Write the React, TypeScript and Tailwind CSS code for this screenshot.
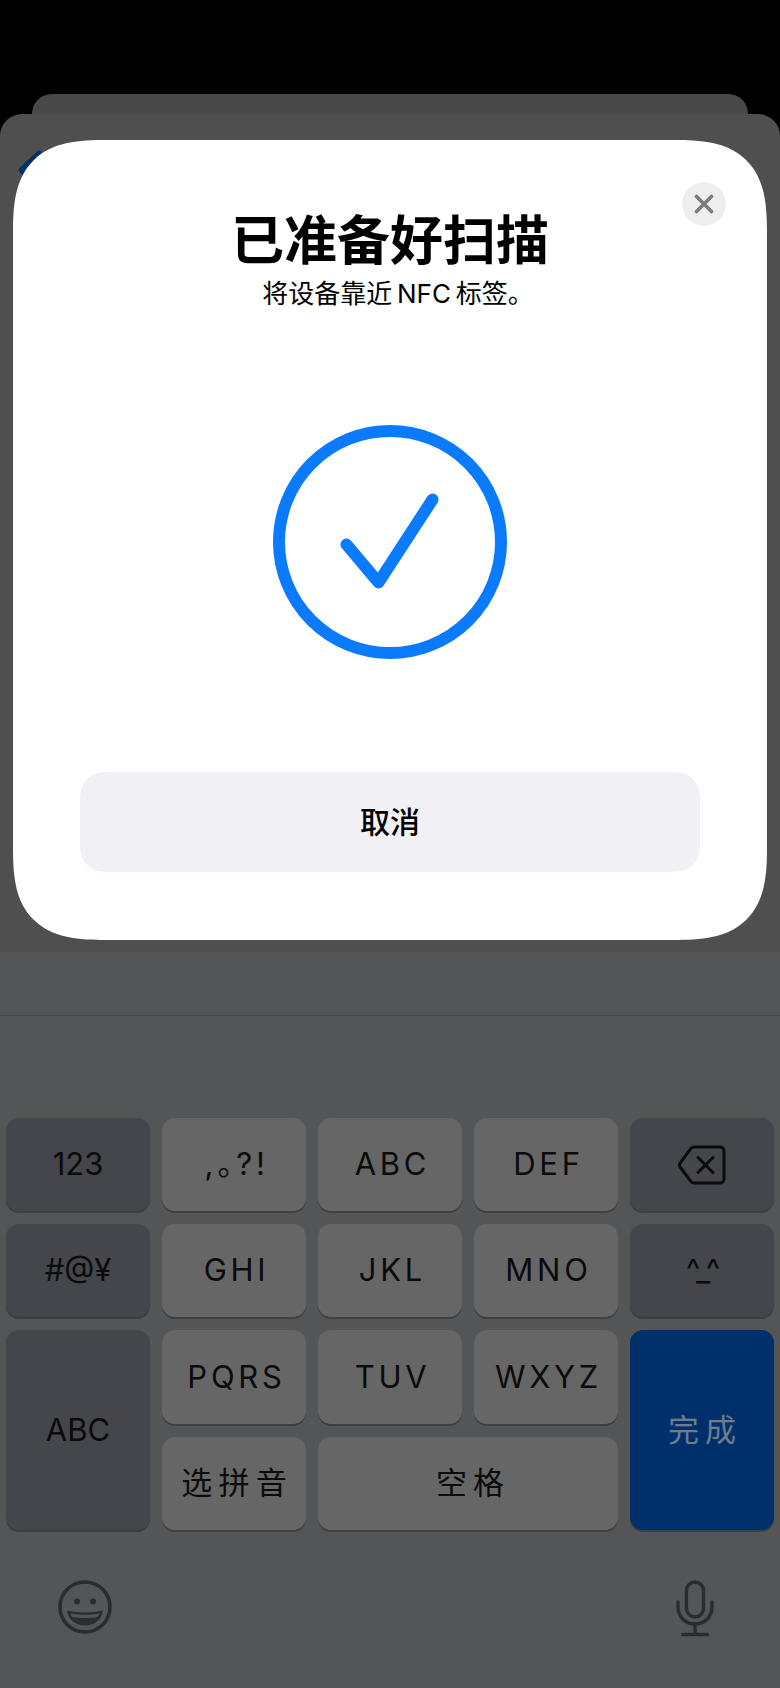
const cjk = "font-['Inter','Noto_Sans_CJK_SC',sans-serif]";

function Key({
  children,
  tone = "light",
  className = "",
}: {
  children: React.ReactNode;
  tone?: "light" | "dark" | "blue";
  className?: string;
}) {
  const tones = {
    light: "bg-[#666666] shadow-[0_2px_0_#3f4042]",
    dark: "bg-[#45464b] shadow-[0_2px_0_#3c3d41]",
    blue: "bg-[#00306b] shadow-[0_2px_0_#3f4042]",
  };
  return (
    <div className={`flex items-center justify-center rounded-[13px] text-[#0b0b0c] ${tones[tone]} ${className}`}>
      {children}
    </div>
  );
}

function Backspace() {
  return (
    <svg width="48" height="40" viewBox="0 0 48 40" fill="none" stroke="#0b0b0c" strokeWidth="3" strokeLinejoin="round" strokeLinecap="round">
      <path d="M16 2H42a4 4 0 0 1 4 4V34a4 4 0 0 1-4 4H16a4 4 0 0 1-3-1.400L2.500 22.500a4 4 0 0 1 0-5L13 3.400A4 4 0 0 1 16 2Z" />
      <path d="M20 12.500L35 27.500M35 12.500L20 27.500" />
    </svg>
  );
}

function Smiley() {
  return (
    <svg width="54" height="54" viewBox="0 0 54 54" fill="none">
      <circle cx="27" cy="27" r="25" stroke="#2b2c2e" strokeWidth="3.600" />
      <circle cx="19" cy="21.500" r="3" fill="#2b2c2e" />
      <circle cx="35" cy="21.500" r="3" fill="#2b2c2e" />
      <path d="M9 30.500C20 33 34 33 45 30.500C44 40 36 45.500 27 45.500C18 45.500 10 40 9 30.500Z" fill="#2b2c2e" />
      <path d="M12.500 33.500C21 35.300 33 35.300 41.500 33.500C41 35 40.500 36 39.500 37C32 38.300 22 38.300 14.500 37C13.500 36 13 35 12.500 33.500Z" fill="#535557" />
    </svg>
  );
}

function Mic() {
  return (
    <svg width="38" height="57" viewBox="0 0 38 57" fill="none" stroke="#2b2c2e" strokeWidth="3.400" strokeLinecap="round">
      <rect x="10.500" y="2" width="17" height="35" rx="8.500" />
      <path d="M2 22V27C2 37 9.500 44 19 44C28.500 44 36 37 36 27V22" />
      <path d="M19 44V54.500M6.500 54.500H31.500" />
    </svg>
  );
}

export default function App() {
  const letter = "text-[31px] tracking-[0.12em] indent-[0.16em]";
  const han = "text-[31px] tracking-[0.2em] indent-[0.2em]";
  const plain = "text-[31px]";
  return (
    <div className={`flex h-[1688px] w-[780px] flex-col overflow-hidden bg-black pt-[94px] ${cjk}`}>
      <div className="mx-[32px] h-[20px] shrink-0 rounded-t-[20px] bg-[#484848]" />

      <div className="relative h-[838px] shrink-0 rounded-t-[22px] bg-[#4f4f50]">
        <svg className="absolute left-[18px] top-[36px]" width="30" height="30" viewBox="0 0 30 30" fill="none" stroke="#00306b" strokeWidth="5" strokeLinecap="round" strokeLinejoin="round">
          <path d="M21 3L3 20L9 26" />
        </svg>

        <div className="absolute left-[13px] right-[13px] top-[26px] flex h-[800px] flex-col items-center rounded-[94px] bg-white [corner-shape:superellipse(1.5)]">
          <div className="absolute right-[41px] top-[42px] flex h-[44px] w-[44px] items-center justify-center rounded-full bg-[#eeeeef]">
            <svg width="20" height="20" viewBox="0 0 20 20" fill="none" stroke="#7b7b80" strokeWidth="3.600" strokeLinecap="round">
              <path d="M2.500 2.500L17.500 17.500M17.500 2.500L2.500 17.500" />
            </svg>
          </div>

          <h1 className="mt-[66px] text-[53px] font-bold leading-[70px] text-black">已准备好扫描</h1>
          <p className="mt-[-1px] pl-[16px] text-[26px] leading-[38px] text-black">将设备靠近{"\u2009"}NFC{"\u2009"}标签。</p>

          <svg className="mt-[112px]" width="234" height="234" viewBox="0 0 234 234" fill="none" stroke="#0a7aff" strokeLinecap="round" strokeLinejoin="round">
            <circle cx="117" cy="117" r="111" strokeWidth="12" />
            <path d="M73.500 119.500L105.500 157.500L159.500 74.500" strokeWidth="12" />
          </svg>

          <button className="mt-[113px] flex h-[100px] w-[620px] items-center justify-center rounded-[32px] bg-[#f1f1f5] text-[30px] font-medium text-black [corner-shape:superellipse(1.5)]">
            取消
          </button>
        </div>
      </div>

      <div className="flex flex-1 flex-col bg-[#535557]">
        <div className="h-[64px] shrink-0 border-b border-[#47484a]" />
        <div className="grid grid-cols-[repeat(5,144px)] grid-rows-[93px_93px_94px_93px] gap-x-[12px] gap-y-[13px] pl-[6px] pt-[102px]">
          <Key tone="dark" className={plain}>123</Key>
          <Key className={`${letter} [font-feature-settings:'palt']`}>,。?!</Key>
          <Key className={letter}>ABC</Key>
          <Key className={letter}>DEF</Key>
          <Key tone="dark"><Backspace /></Key>

          <Key tone="dark" className={plain}>#@¥</Key>
          <Key className={letter}>GHI</Key>
          <Key className={letter}>JKL</Key>
          <Key className={letter}>MNO</Key>
          <Key tone="dark" className="text-[31px] tracking-[-0.07em]">^_^</Key>

          <Key tone="dark" className={`row-span-2 ${plain}`}>ABC</Key>
          <Key className={letter}>PQRS</Key>
          <Key className={letter}>TUV</Key>
          <Key className={letter}>WXYZ</Key>
          <Key tone="blue" className={`row-span-2 !text-[#6f7c8c] ${han}`}>完成</Key>

          <Key className={han}>选拼音</Key>
          <Key className={`col-span-2 pl-[4px] ${han}`}>空格</Key>
        </div>
        <div className="flex items-start justify-between pl-[58px] pr-[66px] pt-[50px]">
          <Smiley />
          <Mic />
        </div>
      </div>
    </div>
  );
}
